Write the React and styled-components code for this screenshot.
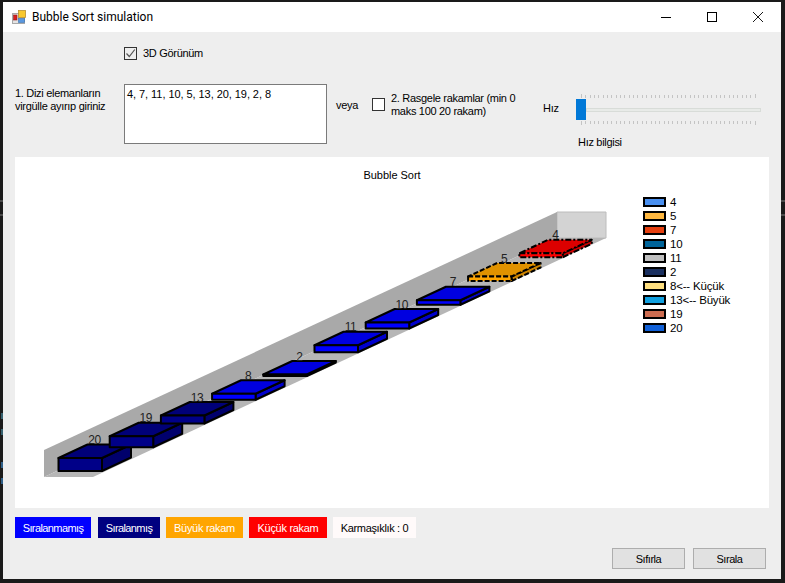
import React from "react";
import styled, { createGlobalStyle } from "styled-components";

const bars = [
  { value: 20, tone: "navy", h: 13 },
  { value: 19, tone: "navy", h: 11 },
  { value: 13, tone: "navy", h: 8 },
  { value: 8, tone: "blue", h: 6 },
  { value: 2, tone: "blue", h: 1.5 },
  { value: 11, tone: "blue", h: 7 },
  { value: 10, tone: "blue", h: 6 },
  { value: 7, tone: "blue", h: 4.5 },
  { value: 5, tone: "orange", h: 4.5, dash: "5 2" },
  { value: 4, tone: "red", h: 4, dash: "6 2 2 2" },
];

const tones = {
  navy: { front: "#000088", top: "#000078", side: "#00006c" },
  blue: { front: "#0000ff", top: "#0000e0", side: "#0000cc" },
  orange: { front: "#ffa500", top: "#e09200", side: "#cc8400" },
  red: { front: "#ff0000", top: "#dc0000", side: "#cc0000" },
};

const legend = [
  { label: "4", color: "#4a90f0" },
  { label: "5", color: "#ffb840" },
  { label: "7", color: "#e64010" },
  { label: "10", color: "#00649a" },
  { label: "11", color: "#c0c0c0" },
  { label: "2", color: "#1a3060" },
  { label: "8<-- Küçük", color: "#ffe080" },
  { label: "13<-- Büyük", color: "#10a0e0" },
  { label: "19", color: "#cc6c50" },
  { label: "20", color: "#1060d8" },
];

const chips = [
  { label: "Sıralanmamış", bg: "#0000ff", fg: "#fff", width: 76, track: -0.6 },
  { label: "Sıralanmış", bg: "#000080", fg: "#fff", width: 62, track: -0.6 },
  { label: "Büyük rakam", bg: "#ffa500", fg: "#fff", width: 77, track: -0.3 },
  { label: "Küçük rakam", bg: "#ff0000", fg: "#fff", width: 78, track: -0.3 },
  { label: "Karmaşıklık : 0", bg: "#fffafa", fg: "#000", width: 83, track: -0.35 },
];

const specks = [
  { x: 0, y: 200, w: 3, h: 2, c: "#4a4a4a" },
  { x: 0, y: 214, w: 3, h: 2, c: "#4a4a4a" },
  { x: 781, y: 200, w: 4, h: 2, c: "#4a4a4a" },
  { x: 781, y: 214, w: 4, h: 2, c: "#4a4a4a" },
  { x: 1, y: 413, w: 2, h: 6, c: "#35606e" },
  { x: 1, y: 429, w: 2, h: 6, c: "#35606e" },
  { x: 1, y: 462, w: 2, h: 6, c: "#2f5f88" },
  { x: 1, y: 478, w: 2, h: 6, c: "#2f5f88" },
];

const GlobalStyle = createGlobalStyle`
  html, body {
    margin: 0;
    padding: 0;
    background: #1a1a1a;
  }
  body {
    font-family: "Liberation Sans", Arial, sans-serif;
    font-size: 11px;
    letter-spacing: -0.3px;
    color: #000;
  }
`;

const Screen = styled.div`
  position: relative;
  width: 785px;
  height: 583px;
  box-sizing: border-box;
  padding: 2px 4px 4px 3px;
  overflow: hidden;
`;

const Speck = styled.i`
  position: absolute;
  left: ${(p) => p.$x}px;
  top: ${(p) => p.$y}px;
  width: ${(p) => p.$w}px;
  height: ${(p) => p.$h}px;
  background: ${(p) => p.$c};
`;

const Win = styled.div`
  height: 100%;
  display: flex;
  flex-direction: column;
  background: #eeeeee;
`;

const TitleBar = styled.div`
  height: 30px;
  flex: none;
  display: flex;
  align-items: center;
  background: #fff;
  padding-left: 9px;
`;

const Title = styled.span`
  margin-left: 6px;
  font-family: Roboto, sans-serif;
  font-size: 12px;
  letter-spacing: 0;
  flex: 1;
`;

const WinButton = styled.div`
  width: 46px;
  height: 30px;
  display: flex;
  align-items: center;
  justify-content: center;
`;

const Content = styled.div`
  flex: 1;
  display: flex;
  flex-direction: column;
  padding: 15px 15px 0 12px;
`;

const ViewRow = styled.label`
  display: flex;
  align-items: center;
  gap: 6px;
  height: 13px;
  line-height: 12px;
  margin-left: 109px;
  margin-bottom: 24px;
`;

const ViewText = styled.span`
  margin-top: -2px;
`;

const Box = styled.span`
  width: 13px;
  height: 13px;
  box-sizing: border-box;
  flex: none;
  border: 1px solid #333;
  background: ${(p) => (p.$plain ? "#fff" : "transparent")};
  display: flex;
  align-items: center;
  justify-content: center;
`;

const InputRow = styled.div`
  display: flex;
  height: 73px;
  align-items: flex-start;
`;

const Prompt = styled.div`
  width: 109px;
  flex: none;
  margin-top: 3px;
  line-height: 13px;
`;

const Numbers = styled.textarea`
  width: 203px;
  height: 60px;
  flex: none;
  box-sizing: border-box;
  border: 1px solid #7a7a7a;
  background: #fff;
  padding: 3px 2px;
  margin: 0;
  resize: none;
  outline: none;
  overflow: hidden;
  font: 11px/13px "Liberation Sans", Arial, sans-serif;
  letter-spacing: -0.06px;
  color: #000;
`;

const Or = styled.span`
  width: 36px;
  flex: none;
  margin: 15px 0 0 9px;
  line-height: 13px;
`;

const RandomPick = styled.label`
  width: 171px;
  flex: none;
  display: flex;
  align-items: flex-start;
  gap: 6px;
  margin-top: 14px;
`;

const RandomText = styled.span`
  margin-top: -6px;
  line-height: 13px;
`;

const SpeedLabel = styled.span`
  width: 33px;
  flex: none;
  margin-top: 18px;
  line-height: 13px;
`;

const SpeedCol = styled.div`
  width: 185px;
  flex: none;
  margin-top: 10px;
`;

const Ticks = styled.div`
  display: flex;
  justify-content: space-between;
  align-items: ${(p) => (p.$down ? "flex-start" : "flex-end")};
  margin: 0 5px;
  height: 4px;
`;

const Tick = styled.i`
  width: 1px;
  height: ${(p) => (p.$major ? 4 : 3)}px;
  background: #c4c4c4;
`;

const Track = styled.div`
  height: 21px;
  margin: 1px 0;
  display: flex;
  align-items: center;
`;

const Thumb = styled.div`
  width: 10px;
  height: 21px;
  flex: none;
  background: #0078d7;
`;

const Rail = styled.div`
  flex: 1;
  height: 4px;
  box-sizing: border-box;
  border: 1px solid #d8dcd8;
  background: #e8ebe8;
`;

const SpeedInfo = styled.div`
  margin: 11px 0 0 2px;
  line-height: 13px;
`;

const ChartPanel = styled.div`
  width: 754px;
  height: 351px;
  flex: none;
  display: flex;
  background: #fff;
`;

const ChartSvg = styled.svg`
  flex: none;
  display: block;
  font-family: "Liberation Sans", Arial, sans-serif;
  font-size: 11px;
  letter-spacing: -0.03px;
`;

const BarLabel = styled.text`
  font-size: 12px;
  letter-spacing: -0.5px;
  fill: #222;
`;

const Legend = styled.div`
  padding-top: 38px;
  display: flex;
  flex-direction: column;
`;

const LegendRow = styled.div`
  height: 14px;
  display: flex;
  align-items: center;
  gap: 4px;
  white-space: nowrap;
  font-size: 11.5px;
  letter-spacing: -0.2px;
`;

const Swatch = styled.i`
  width: 23px;
  height: 10px;
  box-sizing: border-box;
  border: 2px solid #000;
  background: ${(p) => p.$color};
`;

const ChipRow = styled.div`
  display: flex;
  gap: 6px;
  margin-top: 9px;
`;

const Chip = styled.div`
  width: ${(p) => p.$width}px;
  height: 21px;
  display: flex;
  align-items: center;
  justify-content: center;
  background: ${(p) => p.$bg};
  color: ${(p) => p.$fg};
  letter-spacing: ${(p) => p.$track}px;

  &:nth-child(2) {
    margin-left: 1px;
  }
`;

const Actions = styled.div`
  display: flex;
  justify-content: flex-end;
  gap: 8px;
  margin-top: 10px;
`;

const Action = styled.button`
  width: 73px;
  height: 21px;
  padding: 0;
  border: 1px solid #adadad;
  background: #e1e1e1;
  font: 11px "Liberation Sans", Arial, sans-serif;
  letter-spacing: -0.45px;
  color: #000;
`;

const pts = (list) => list.map((p) => p.join(",")).join(" ");

const Bar = ({ value, tone, dash, h, index }) => {
  const x = 58.5 + index * 51.2;
  const base = 471 - index * 23.75;
  const w = 43.5;
  const dx = 29;
  const dy = 13.5;
  const c = tones[tone];
  const edge = { stroke: "#000", strokeWidth: 2, strokeLinejoin: "round", strokeDasharray: dash };
  return (
    <g>
      <polygon
        points={pts([[x + w, base], [x + w + dx, base - dy], [x + w + dx, base - h - dy], [x + w, base - h]])}
        fill={c.side}
        {...edge}
      />
      <polygon
        points={pts([[x, base - h], [x + w, base - h], [x + w + dx, base - h - dy], [x + dx, base - h - dy]])}
        fill={c.top}
        {...edge}
      />
      <rect x={x} y={base - h} width={w} height={h} fill={c.front} {...edge} />
      <BarLabel x={x + 36} y={base - h - dy - 0.5} textAnchor="middle">
        {value}
      </BarLabel>
    </g>
  );
};

const AppIcon = () => (
  <svg width="14" height="14" viewBox="0 0 14 14">
    <rect x="0.5" y="3.5" width="12" height="10" fill="#e4e4e4" stroke="#a8a8a8" />
    <rect x="1.5" y="5" width="3.5" height="5" fill="#d82020" stroke="#902020" strokeWidth="0.6" />
    <rect x="6.5" y="0.5" width="7" height="7" fill="#f8c830" stroke="#b89030" strokeWidth="0.8" />
    <rect x="6.5" y="8.5" width="6" height="4" fill="#5a98e0" stroke="#3a70b0" strokeWidth="0.6" />
  </svg>
);

const CheckMark = () => (
  <svg width="11" height="11" viewBox="0 0 11 11">
    <path d="M1.5 5.5 L4.3 8.5 L9.8 1.5" fill="none" stroke="#555" strokeWidth="1.2" />
  </svg>
);

export default function App() {
  const ticks = Array.from({ length: 41 }, (_, i) => i);
  return (
    <Screen>
      <GlobalStyle />
      {specks.map((s) => (
        <Speck key={`${s.x}-${s.y}`} $x={s.x} $y={s.y} $w={s.w} $h={s.h} $c={s.c} />
      ))}
      <Win>
        <TitleBar>
          <AppIcon />
          <Title>Bubble Sort simulation</Title>
          <WinButton>
            <svg width="10" height="10" viewBox="0 0 10 10">
              <path d="M0 5.5 H10" stroke="#000" />
            </svg>
          </WinButton>
          <WinButton>
            <svg width="10" height="10" viewBox="0 0 10 10">
              <rect x="0.5" y="0.5" width="9" height="9" fill="none" stroke="#000" />
            </svg>
          </WinButton>
          <WinButton>
            <svg width="10" height="10" viewBox="0 0 10 10">
              <path d="M0 0 L10 10 M10 0 L0 10" stroke="#000" strokeWidth="0.9" />
            </svg>
          </WinButton>
        </TitleBar>
        <Content>
          <ViewRow>
            <Box>
              <CheckMark />
            </Box>
            <ViewText>3D Görünüm</ViewText>
          </ViewRow>
          <InputRow>
            <Prompt>
              1. Dizi elemanların
              <br />
              virgülle ayırıp giriniz
            </Prompt>
            <Numbers readOnly value="4, 7, 11, 10, 5, 13, 20, 19, 2, 8" />
            <Or>veya</Or>
            <RandomPick>
              <Box $plain />
              <RandomText>
                2. Rasgele rakamlar (min 0
                <br />
                maks 100 20 rakam)
              </RandomText>
            </RandomPick>
            <SpeedLabel>Hız</SpeedLabel>
            <SpeedCol>
              <Ticks>
                {ticks.map((i) => (
                  <Tick key={i} $major={i === 0 || i === 40} />
                ))}
              </Ticks>
              <Track>
                <Thumb />
                <Rail />
              </Track>
              <Ticks $down>
                {ticks.map((i) => (
                  <Tick key={i} $major={i === 0 || i === 40} />
                ))}
              </Ticks>
              <SpeedInfo>Hız bilgisi</SpeedInfo>
            </SpeedCol>
          </InputRow>
          <ChartPanel>
            <ChartSvg width="628" height="351" viewBox="15 157 628 351">
              <text x="392" y="179" textAnchor="middle">
                Bubble Sort
              </text>
              <polygon points="557,212 606,212 606,238 557,238" fill="#d3d3d3" stroke="#bcbcbc" />
              <polygon points="44,450 557,212 557,238 44,477" fill="#a9a9a9" />
              <polygon points="44,477 93,477 606,238 557,238" fill="#b6b6b6" />
              {bars.map((b, i) => (
                <Bar key={b.value} index={i} value={b.value} tone={b.tone} dash={b.dash} h={b.h} />
              ))}
            </ChartSvg>
            <Legend>
              {legend.map((l) => (
                <LegendRow key={l.label}>
                  <Swatch $color={l.color} />
                  {l.label}
                </LegendRow>
              ))}
            </Legend>
          </ChartPanel>
          <ChipRow>
            {chips.map((c) => (
              <Chip key={c.label} $bg={c.bg} $fg={c.fg} $width={c.width} $track={c.track}>
                {c.label}
              </Chip>
            ))}
          </ChipRow>
          <Actions>
            <Action>Sıfırla</Action>
            <Action>Sırala</Action>
          </Actions>
        </Content>
      </Win>
    </Screen>
  );
}
